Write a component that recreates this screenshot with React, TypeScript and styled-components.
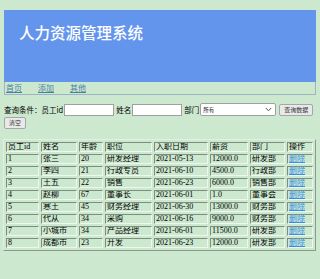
import styled, { createGlobalStyle } from "styled-components";

type Employee = {
    id: number;
    name: string;
    age: number;
    job: string;
    date: string;
    salary: string;
    dept: string;
}

const employees: Employee[] = [
    { id: 1, name: "张三", age: 20, job: "研发经理", date: "2021-05-13", salary: "12000.0", dept: "研发部" },
    { id: 2, name: "李四", age: 21, job: "行政专员", date: "2021-06-10", salary: "4500.0", dept: "行政部" },
    { id: 3, name: "王五", age: 22, job: "销售", date: "2021-06-23", salary: "6000.0", dept: "销售部" },
    { id: 4, name: "赵柳", age: 67, job: "董事长", date: "2021-06-01", salary: "1.0", dept: "董事会" },
    { id: 5, name: "寒王", age: 45, job: "财务经理", date: "2021-06-30", salary: "13000.0", dept: "财务部" },
    { id: 6, name: "代从", age: 34, job: "采购", date: "2021-06-16", salary: "9000.0", dept: "财务部" },
    { id: 7, name: "小城市", age: 34, job: "产品经理", date: "2021-06-01", salary: "11500.0", dept: "研发部" },
    { id: 8, name: "成都市", age: 23, job: "开发", date: "2021-06-23", salary: "12000.0", dept: "研发部" },
]

const columns = [
    { title: "员工id", width: 33 },
    { title: "姓名", width: 36 },
    { title: "年龄", width: 24 },
    { title: "职位", width: 47 },
    { title: "入职日期", width: 54 },
    { title: "薪资", width: 38 },
    { title: "部门", width: 35 },
    { title: "操作", width: 26 },
]

const GlobalStyle = createGlobalStyle`
  html, body {
    margin: 0;
    padding: 0;
    background: #cce8cf;
  }
  body {
    font-family: "Liberation Serif", "Noto Sans CJK SC", serif;
    font-size: 8px;
    color: #000;
  }
`

export default function App() {
    return (
        <StyledPage>
            <GlobalStyle/>
            <StyledHeader>
                <StyledTitle>人力资源管理系统</StyledTitle>
            </StyledHeader>
            <StyledNav>
                <StyledNavLink href="#">首页</StyledNavLink>
                <StyledNavLink href="#">添加</StyledNavLink>
                <StyledNavLink href="#">其他</StyledNavLink>
            </StyledNav>
            <StyledSearch>
                <StyledLabel>查询条件：员工id</StyledLabel>
                <StyledInput type="text"/>
                <StyledLabel>姓名</StyledLabel>
                <StyledInput type="text"/>
                <StyledLabel>部门</StyledLabel>
                <StyledSelectWrap>
                    <StyledSelect defaultValue="all">
                        <option value="all">所有</option>
                    </StyledSelect>
                    <StyledChevron width="7" height="5" viewBox="0 0 7 5">
                        <path d="M0.8 1 L3.5 3.8 L6.2 1" fill="none" stroke="#555" strokeWidth="1"/>
                    </StyledChevron>
                </StyledSelectWrap>
                <StyledButton>查询数据</StyledButton>
            </StyledSearch>
            <StyledButtonRow>
                <StyledButton>清空</StyledButton>
            </StyledButtonRow>
            <StyledTable>
                <colgroup>
                    {columns.map(c => <col key={c.title} style={{width: c.width}}/>)}
                </colgroup>
                <thead>
                    <tr>
                        {columns.map(c => <StyledCell as="th" key={c.title}>{c.title}</StyledCell>)}
                    </tr>
                </thead>
                <tbody>
                    {employees.map(e => (
                        <tr key={e.id}>
                            <StyledCell>{e.id}</StyledCell>
                            <StyledCell>{e.name}</StyledCell>
                            <StyledCell>{e.age}</StyledCell>
                            <StyledCell>{e.job}</StyledCell>
                            <StyledCell>{e.date}</StyledCell>
                            <StyledCell>{e.salary}</StyledCell>
                            <StyledCell>{e.dept}</StyledCell>
                            <StyledCell><StyledDelete href="#">删除</StyledDelete></StyledCell>
                        </tr>
                    ))}
                </tbody>
            </StyledTable>
        </StyledPage>
    )
}

const StyledPage = styled.div`
  padding: 10px 4px 0;
`
const StyledHeader = styled.div`
  height: 72px;
  background: #6495ed;
  padding: 0 15px;
  box-sizing: border-box;
  overflow: hidden;
`
const StyledTitle = styled.h1`
  margin: 12px 0 0;
  font-family: "Noto Sans CJK SC", sans-serif;
  font-size: 15.5px;
  line-height: 20px;
  font-weight: 500;
  color: #fff;
`
const StyledNav = styled.div`
  display: flex;
  gap: 16px;
  height: 12px;
  border: 1px solid #9fb3c2;
  border-top: none;
  padding: 0 1px;
  align-items: center;
`
const StyledNavLink = styled.a`
  font-family: "Noto Sans CJK SC", sans-serif;
  font-size: 8px;
  line-height: 10px;
  color: #4a7fa3;
  text-decoration: underline;
`
const StyledSearch = styled.div`
  display: flex;
  align-items: center;
  margin-top: 8px;
  height: 13px;
`
const StyledLabel = styled.span`
  font-family: "Noto Sans CJK SC", sans-serif;
  font-size: 7.5px;
  white-space: nowrap;
  margin: 0 1px 0 0;
`
const StyledInput = styled.input`
  width: 50px;
  height: 12px;
  box-sizing: border-box;
  border: 1px solid #a0a0a0;
  background: #fff;
  padding: 0;
  margin: 0 2px 0 0;
`
const StyledSelectWrap = styled.div`
  position: relative;
  display: flex;
  margin: 0 3px 0 0;
`
const StyledSelect = styled.select`
  appearance: none;
  width: 76px;
  height: 13px;
  box-sizing: border-box;
  border: 1px solid #a0a0a0;
  border-radius: 2px;
  background: #fff;
  font-family: "Noto Sans CJK SC", sans-serif;
  font-size: 5.5px;
  padding: 0 2px;
  margin: 0;
  color: #222;
`
const StyledChevron = styled.svg`
  position: absolute;
  right: 4px;
  top: 4px;
  pointer-events: none;
`
const StyledButton = styled.button`
  height: 12px;
  padding: 0 4px;
  box-sizing: border-box;
  border: 1px solid #a6a6a6;
  border-radius: 2px;
  background: #e9e9e9;
  font-family: "Noto Sans CJK SC", sans-serif;
  font-size: 6px;
  line-height: 10px;
  color: #333;
  white-space: nowrap;
`
const StyledButtonRow = styled.div`
  margin-top: 1px;
  display: flex;
`
const StyledTable = styled.table`
  margin: 10px 0 0 -1px;
  width: 313px;
  table-layout: fixed;
  border-collapse: separate;
  border-spacing: 2px;
  border: 1px solid;
  border-color: #e4efe4 #8a9a8a #8a9a8a #e4efe4;
`
const StyledCell = styled.td`
  height: 10px;
  box-sizing: border-box;
  padding: 0 1px;
  border: 1px solid;
  border-color: #7e8e7e #eef6ee #eef6ee #7e8e7e;
  font-family: "Liberation Serif", "Noto Sans CJK SC", serif;
  font-size: 8px;
  font-weight: normal;
  line-height: 8px;
  text-align: left;
  white-space: nowrap;
  overflow: hidden;
`
const StyledDelete = styled.a`
  color: #3490e8;
  text-decoration: underline;
`
